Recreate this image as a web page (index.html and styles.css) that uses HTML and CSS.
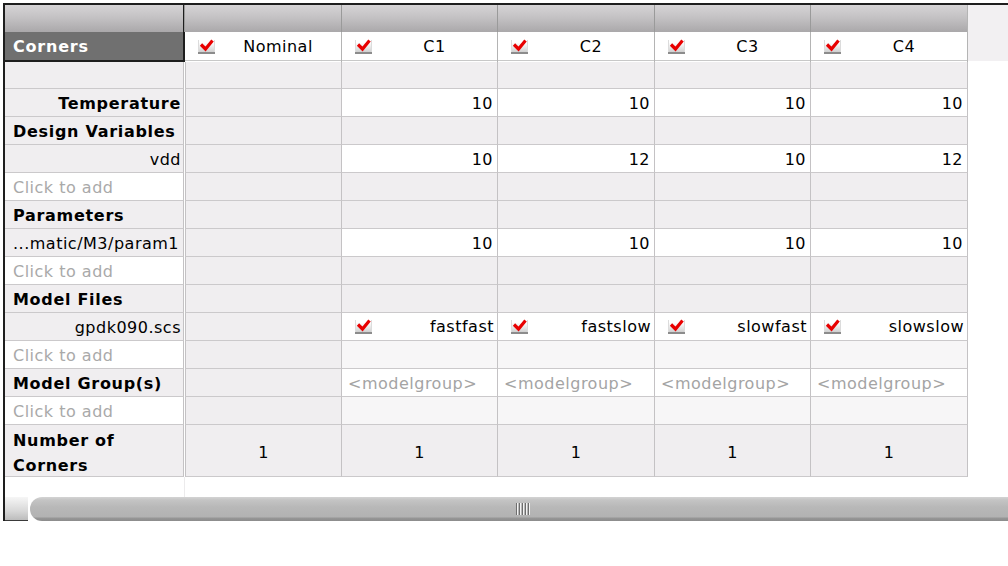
FILE: index.html
```html
<!DOCTYPE html>
<html>
<head>
<meta charset="utf-8">
<link rel="stylesheet" href="styles.css">
</head>
<body>
<div class="sheet">
  <div class="head">
    <div class="corner-box">
      <div class="grad"></div>
      <div class="corner-label">Corners</div>
    </div>
    <div class="hcol">
      <div class="grad"></div>
      <div class="hname"><span class="cb"><svg viewBox="0 0 17 13" width="17" height="13"><path d="M3 5.5 L7.5 10 L14.5 1.5" fill="none" stroke="#e80000" stroke-width="3.2"/></svg></span><span class="hn">Nominal</span></div>
    </div>
    <div class="hcol">
      <div class="grad"></div>
      <div class="hname"><span class="cb"><svg viewBox="0 0 17 13" width="17" height="13"><path d="M3 5.5 L7.5 10 L14.5 1.5" fill="none" stroke="#e80000" stroke-width="3.2"/></svg></span><span class="hn">C1</span></div>
    </div>
    <div class="hcol">
      <div class="grad"></div>
      <div class="hname"><span class="cb"><svg viewBox="0 0 17 13" width="17" height="13"><path d="M3 5.5 L7.5 10 L14.5 1.5" fill="none" stroke="#e80000" stroke-width="3.2"/></svg></span><span class="hn">C2</span></div>
    </div>
    <div class="hcol">
      <div class="grad"></div>
      <div class="hname"><span class="cb"><svg viewBox="0 0 17 13" width="17" height="13"><path d="M3 5.5 L7.5 10 L14.5 1.5" fill="none" stroke="#e80000" stroke-width="3.2"/></svg></span><span class="hn">C3</span></div>
    </div>
    <div class="hcol">
      <div class="grad"></div>
      <div class="hname"><span class="cb"><svg viewBox="0 0 17 13" width="17" height="13"><path d="M3 5.5 L7.5 10 L14.5 1.5" fill="none" stroke="#e80000" stroke-width="3.2"/></svg></span><span class="hn">C4</span></div>
    </div>
    <div class="hfill"></div>
  </div>

  <div class="row first">
    <div class="lab g"></div><div class="sep"></div>
    <div class="c g nom"></div><div class="c g"></div><div class="c g"></div><div class="c g"></div><div class="c g"></div>
  </div>
  <div class="row">
    <div class="lab g bold right">Temperature</div><div class="sep"></div>
    <div class="c g nom"></div><div class="c w num">10</div><div class="c w num">10</div><div class="c w num">10</div><div class="c w num">10</div>
  </div>
  <div class="row">
    <div class="lab g bold">Design Variables</div><div class="sep"></div>
    <div class="c g nom"></div><div class="c g"></div><div class="c g"></div><div class="c g"></div><div class="c g"></div>
  </div>
  <div class="row">
    <div class="lab g right">vdd</div><div class="sep"></div>
    <div class="c g nom"></div><div class="c w num">10</div><div class="c w num">12</div><div class="c w num">10</div><div class="c w num">12</div>
  </div>
  <div class="row">
    <div class="lab w hint">Click to add</div><div class="sep"></div>
    <div class="c g nom"></div><div class="c g"></div><div class="c g"></div><div class="c g"></div><div class="c g"></div>
  </div>
  <div class="row">
    <div class="lab g bold">Parameters</div><div class="sep"></div>
    <div class="c g nom"></div><div class="c g"></div><div class="c g"></div><div class="c g"></div><div class="c g"></div>
  </div>
  <div class="row">
    <div class="lab g">...matic/M3/param1</div><div class="sep"></div>
    <div class="c g nom"></div><div class="c w num">10</div><div class="c w num">10</div><div class="c w num">10</div><div class="c w num">10</div>
  </div>
  <div class="row">
    <div class="lab w hint">Click to add</div><div class="sep"></div>
    <div class="c g nom"></div><div class="c g"></div><div class="c g"></div><div class="c g"></div><div class="c g"></div>
  </div>
  <div class="row">
    <div class="lab g bold">Model Files</div><div class="sep"></div>
    <div class="c g nom"></div><div class="c g"></div><div class="c g"></div><div class="c g"></div><div class="c g"></div>
  </div>
  <div class="row">
    <div class="lab g right">gpdk090.scs</div><div class="sep"></div>
    <div class="c g nom"></div>
    <div class="c w mf"><span class="cb"><svg viewBox="0 0 17 13" width="17" height="13"><path d="M3 5.5 L7.5 10 L14.5 1.5" fill="none" stroke="#e80000" stroke-width="3.2"/></svg></span><span class="mft">fastfast</span></div>
    <div class="c w mf"><span class="cb"><svg viewBox="0 0 17 13" width="17" height="13"><path d="M3 5.5 L7.5 10 L14.5 1.5" fill="none" stroke="#e80000" stroke-width="3.2"/></svg></span><span class="mft">fastslow</span></div>
    <div class="c w mf"><span class="cb"><svg viewBox="0 0 17 13" width="17" height="13"><path d="M3 5.5 L7.5 10 L14.5 1.5" fill="none" stroke="#e80000" stroke-width="3.2"/></svg></span><span class="mft">slowfast</span></div>
    <div class="c w mf"><span class="cb"><svg viewBox="0 0 17 13" width="17" height="13"><path d="M3 5.5 L7.5 10 L14.5 1.5" fill="none" stroke="#e80000" stroke-width="3.2"/></svg></span><span class="mft">slowslow</span></div>
  </div>
  <div class="row">
    <div class="lab w hint">Click to add</div><div class="sep"></div>
    <div class="c g nom"></div><div class="c l"></div><div class="c l"></div><div class="c l"></div><div class="c l"></div>
  </div>
  <div class="row">
    <div class="lab g bold">Model Group(s)</div><div class="sep"></div>
    <div class="c g nom"></div><div class="c w ph">&lt;modelgroup&gt;</div><div class="c w ph">&lt;modelgroup&gt;</div><div class="c w ph">&lt;modelgroup&gt;</div><div class="c w ph">&lt;modelgroup&gt;</div>
  </div>
  <div class="row">
    <div class="lab w hint">Click to add</div><div class="sep"></div>
    <div class="c g nom"></div><div class="c l"></div><div class="c l"></div><div class="c l"></div><div class="c l"></div>
  </div>
  <div class="row last">
    <div class="lab g bold two">Number of<br>Corners</div><div class="sep"></div>
    <div class="c g nom mid">1</div><div class="c g mid">1</div><div class="c g mid">1</div><div class="c g mid">1</div><div class="c g mid">1</div>
  </div>
  <div class="below"><div class="below-lab"></div></div>
  <div class="scroll">
    <div class="sbtn"></div>
    <div class="thumb"><div class="grip"></div></div>
  </div>
</div>
</body>
</html>
```

FILE: styles.css
```css
html, body {
  margin: 0;
  padding: 0;
  background: #ffffff;
}
body {
  font-family: "DejaVu Sans", "Liberation Sans", sans-serif;
  font-size: 16px;
  color: #000;
  width: 1008px;
  height: 566px;
  overflow: hidden;
}
.sheet {
  margin: 3px 0 0 3px;
  border-left: 2px solid #1e1e1e;
  border-top: 2px solid #1e1e1e;
  width: 1003px;
}
.head {
  display: grid;
  grid-template-columns: 180px 157px 156px 157px 156px 157px 1fr;
  height: 57px;
}
.grad {
  height: 27px;
  background: linear-gradient(#d6d4d6, #c2c0c2 50%, #aaa8aa);
}
.corner-box {
  border-right: 2px solid #1e1e1e;
  border-bottom: 2px solid #1e1e1e;
  box-sizing: border-box;
}
.corner-label {
  height: 28px;
  background: #707070;
  color: #fff;
  font-weight: bold;
  letter-spacing: 0.8px;
  line-height: 29px;
  padding-left: 8px;
}
.hcol {
  box-sizing: border-box;
  border-right: 1px solid #b4b4b4;
  display: flex;
  flex-direction: column;
}
.hcol .grad {
  border-left: 1px solid #9a9a9a;
  margin-left: -1px;
}
.hname {
  height: 29px;
  background: #fff;
  border-bottom: 1px solid #c8c8c8;
  display: flex;
  align-items: center;
  padding-left: 13px;
  padding-top: 1px;
  box-sizing: border-box;
}
.hn {
  flex: 1;
  text-align: center;
  letter-spacing: 0.5px;
}
.hfill {
  background: linear-gradient(#f2f0f2 0, #f2f0f2 56px, #fff 56px);
}
.cb {
  display: inline-flex;
  flex: none;
  width: 17px;
  height: 14px;
  box-sizing: border-box;
  background: linear-gradient(#ffffff 20%, #d0d0d0);
  border-bottom: 2px solid #8c8c8c;
  box-shadow: inset 1px 0 #dcdcdc, inset -1px 0 #dcdcdc;
  align-items: flex-start;
}
.cb svg {
  display: block;
  margin-top: -1px;
}
.row {
  display: grid;
  grid-template-columns: 179px 1px 157px 156px 157px 156px 157px;
  height: 28px;
}
.row.first { height: 27px; }
.row.last { height: 52px; }
.row > div {
  box-sizing: border-box;
  border-bottom: 1px solid #cbc9cb;
  white-space: nowrap;
  overflow: hidden;
  padding-top: 1px;
}
.row > .sep {
  background: #fff;
  border-bottom: none;
}
.lab {
  border-right: 1px solid #c4c2c4;
  padding: 0 2px 0 8px;
  display: flex;
  align-items: center;
  letter-spacing: 0.5px;
}
.lab.right { justify-content: flex-end; }
.lab.bold { font-weight: bold; letter-spacing: 0.7px; }
.lab.two { line-height: 25px; padding-top: 4px; }
.lab.hint { color: #a9a9a9; }
.g { background: #f0eef0; }
.w { background: #ffffff; }
.l { background: #f7f6f7; }
.c {
  border-right: 1px solid #c4c2c4;
  display: flex;
  align-items: center;
  letter-spacing: 0.5px;
}
.c.nom { border-left: 1px solid #c4c2c4; }
.c.num {
  justify-content: flex-end;
  padding-right: 4px;
}
.c.mid { justify-content: center; padding-top: 3px; }
.c.ph {
  color: #a4a4a4;
  padding-left: 6px;
}
.c.mf {
  padding: 0 3px 0 13px;
}
.mft {
  flex: 1;
  text-align: right;
}
.below {
  height: 20px;
}
.below-lab {
  width: 180px;
  height: 100%;
  box-sizing: border-box;
  border-right: 1px solid #ecebec;
}
.scroll {
  display: flex;
  height: 24px;
}
.sbtn {
  width: 23px;
  box-sizing: border-box;
  background: linear-gradient(#f6f6f6, #d8d8d8 60%, #bcbcbc);
  border-bottom: 1px solid #3a3a3a;
}
.thumb {
  flex: 1;
  margin-left: 2px;
  border-radius: 12px 0 0 12px;
  background: linear-gradient(#d4d4d4 0, #c4c4c4 3px, #b8b8b8 10px, #b2b2b2 20px, #969696 21px, #8c8c8c 24px);
  display: flex;
  align-items: center;
  padding-left: 486px;
}
.grip {
  width: 15px;
  height: 12px;
  background: repeating-linear-gradient(to right, #6e6e6e 0 1px, #f2f2f2 1px 2px, transparent 2px 3px);
}
```
